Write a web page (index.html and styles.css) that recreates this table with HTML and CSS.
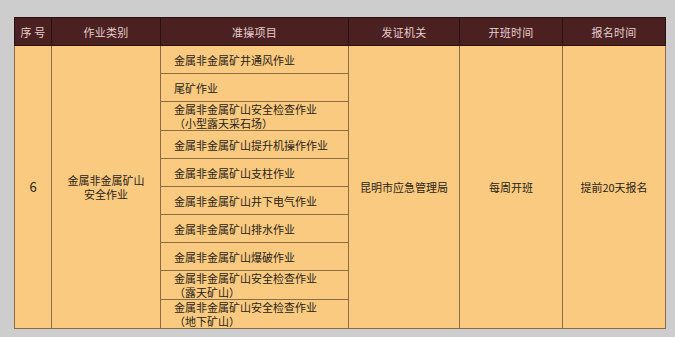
FILE: index.html
```html
<!DOCTYPE html>
<html lang="zh">
<head>
<meta charset="utf-8">
<link rel="stylesheet" href="styles.css">
</head>
<body>
<div class="wrap">
<table class="tbl">
  <colgroup>
    <col class="c1"><col class="c2"><col class="c3"><col class="c4"><col class="c5"><col class="c6">
  </colgroup>
  <thead>
    <tr>
      <th>序 号</th><th>作业类别</th><th>准操项目</th><th>发证机关</th><th>开班时间</th><th>报名时间</th>
    </tr>
  </thead>
  <tbody>
    <tr>
      <td rowspan="10" class="num">6</td>
      <td rowspan="10" class="mid"><span class="ln">金属非金属矿山</span><span class="ln">安全作业</span></td>
      <td class="item">金属非金属矿井通风作业</td>
      <td rowspan="10" class="mid">昆明市应急管理局</td>
      <td rowspan="10" class="mid">每周开班</td>
      <td rowspan="10" class="mid">提前20天报名</td>
    </tr>
    <tr><td class="item">尾矿作业</td></tr>
    <tr><td class="item two"><span class="ln">金属非金属矿山安全检查作业</span><span class="ln">（小型露天采石场）</span></td></tr>
    <tr><td class="item">金属非金属矿山提升机操作作业</td></tr>
    <tr><td class="item">金属非金属矿山支柱作业</td></tr>
    <tr><td class="item">金属非金属矿山井下电气作业</td></tr>
    <tr><td class="item">金属非金属矿山排水作业</td></tr>
    <tr><td class="item">金属非金属矿山爆破作业</td></tr>
    <tr><td class="item two"><span class="ln">金属非金属矿山安全检查作业</span><span class="ln">（露天矿山）</span></td></tr>
    <tr><td class="item two"><span class="ln">金属非金属矿山安全检查作业</span><span class="ln">（地下矿山）</span></td></tr>
  </tbody>
</table>
</div>
</body>
</html>
```

FILE: styles.css
```css
html, body {
  margin: 0;
  padding: 0;
  background: #cdcdcd;
  height: 100%;
}
.wrap {
  padding: 17px 0 0 14px;
}
.tbl {
  border-collapse: collapse;
  table-layout: fixed;
  width: 651px;
  font-family: "Noto Sans CJK SC", "Noto Sans", sans-serif;
  font-size: 11px;
  color: #2a2218;
  border: 1px solid #5e5444;
}
.c1 { width: 37px; }
.c2 { width: 109px; }
.c3 { width: 188px; }
.c4 { width: 111px; }
.c5 { width: 103px; }
.c6 { width: 103px; }
.tbl th {
  background: #4a2020;
  color: #e6cfcf;
  font-weight: normal;
  height: 27px;
  padding: 0;
  text-align: center;
  border: 1px solid #2a1212;
  letter-spacing: 0.2px;
}
.tbl td {
  background: #f9ca80;
  border: 1px solid #8c6c42;
  padding: 0;
  text-align: center;
  vertical-align: middle;
  line-height: 14px;
}
.tbl tbody tr {
  height: 28px;
}
.tbl td.item {
  text-align: left;
  padding-left: 13px;
}
.tbl td.item.two {
  vertical-align: top;
}
.ln {
  display: block;
  height: 14px;
  line-height: 14px;
}
.tbl td.num {
  font-size: 13px;
}
```
